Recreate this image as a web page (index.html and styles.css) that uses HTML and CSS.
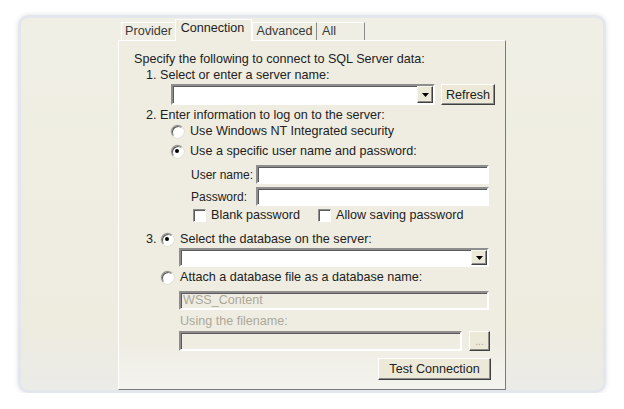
FILE: index.html
```html
<!DOCTYPE html>
<html lang="en">
<head>
  <meta charset="UTF-8" />
  <title>Data Link Properties - Connection</title>
  <link rel="stylesheet" href="styles.css">
</head>
<body>

  <div class="frame">
    <div class="dialog">
      <div class="tabs">
        <div class="tab tab-provider">Provider</div>
        <div class="tab tab-active">Connection</div>
        <div class="tab tab-advanced">Advanced</div>
        <div class="tab tab-all">All</div>
      </div>

      <div class="panel">
        <div class="line intro">Specify the following to connect to SQL Server data:</div>
        <div class="line step">1. Select or enter a server name:</div>

        <div class="server-row">
          <div class="combo combo-server">
            <span class="drop"><svg width="7" height="4" viewBox="0 0 7 4"><path d="M0 0h7L3.5 4z" fill="#000"/></svg></span>
          </div>
          <div class="btn btn-refresh">Refresh</div>
        </div>

        <div class="line step step-2">2. Enter information to log on to the server:</div>
        <div class="line option option-nt"><span class="radio"></span>Use Windows NT Integrated security</div>
        <div class="line option option-user"><span class="radio checked"></span>Use a specific user name and password:</div>

        <div class="cred-row cred-user">
          <span class="cred-label">User name:</span>
          <div class="field cred-input"></div>
        </div>
        <div class="cred-row cred-pass">
          <span class="cred-label">Password:</span>
          <div class="field cred-input"></div>
        </div>

        <div class="line checks">
          <span class="check-item check-blank"><span class="checkbox"></span>Blank password</span>
          <span class="check-item"><span class="checkbox"></span>Allow saving password</span>
        </div>

        <div class="line step step-3"><span class="num">3.</span><span class="radio checked"></span>Select the database on the server:</div>
        <div class="combo combo-db">
          <span class="drop"><svg width="7" height="4" viewBox="0 0 7 4"><path d="M0 0h7L3.5 4z" fill="#000"/></svg></span>
        </div>

        <div class="line option option-attach"><span class="radio"></span>Attach a database file as a database name:</div>
        <div class="field field-disabled field-name">WSS_Content</div>
        <div class="line muted">Using the filename:</div>

        <div class="file-row">
          <div class="field field-disabled field-file"></div>
          <div class="btn btn-browse">...</div>
        </div>

        <div class="btn btn-test">Test Connection</div>
      </div>
    </div>
  </div>

</body>
</html>
```

FILE: styles.css
```css
body {
  margin: 0;
  background: #fff;
  font-family: "Liberation Sans", Arial, sans-serif;
  font-size: 12.6px;
  color: #222;
}

/* marco redondeado alrededor de la captura */
.frame {
  box-sizing: border-box;
  margin: 15px 0 0 18px;
  width: 588px;
  height: 378px;
  border: 3px solid #e4e6ed;
  border-radius: 10px;
  background: linear-gradient(#f0efe5, #eeecdf 82%, #ebebe8);
  box-shadow: 0 0 5px rgba(0,0,0,0.13);
  overflow: hidden;
}
.dialog {
  margin: 1px 0 0 97px;
  width: 388px;
}

/* pestañas */
.tabs {
  display: flex;
  align-items: flex-end;
  height: 21px;
  padding-left: 3px;
  position: relative;
  z-index: 1;
}
.tab {
  box-sizing: border-box;
  height: 18px;
  line-height: 17px;
  text-align: center;
  white-space: nowrap;
  border: 1px solid #fff;
  border-right-color: #8a8a8a;
  border-bottom: none;
  border-left-color: #fdfdfb;
  background: #efeee4;
  color: #3a3a3a;
}
.tab-provider { width: 54px; border-right: none; }
.tab-active {
  width: 77px;
  height: 22px;
  line-height: 17px;
  margin-bottom: -1px;
  padding-right: 2px;
  background: #efede2;
  border-right-color: #fff;
  color: #222;
}
.tab-advanced { width: 65px; border-left: 1px solid #fff; }
.tab-all { width: 48px; text-align: left; padding-left: 5px; border-left: none; }

/* panel */
.panel {
  box-sizing: border-box;
  height: 350px;
  padding: 10px 0 0 0;
  border-top: 1px solid #fff;
  border-left: 1px solid #fff;
  border-right: 1px solid #7c7c7c;
  border-bottom: 1px solid #7c7c7c;
  background: linear-gradient(#efede2 86%, #f3f3ef);
}
.line {
  display: flex;
  align-items: center;
  height: 16px;
  white-space: nowrap;
}
.intro { padding-left: 15px; }
.step { padding-left: 27px; }
.step-2 { margin-top: 2px; }
.option { padding-left: 52px; }
.option-user { margin-top: 4px; }
.option-attach { margin-top: 2px; padding-left: 42px; }
.step-3 { margin-top: 8px; }
.step-3 .num { width: 15px; }
.muted { margin-top: 3px; padding-left: 61px; color: #aca899; }

/* controles estilo clásico */
.field, .combo {
  box-sizing: border-box;
  height: 19px;
  border: 2px solid;
  border-color: #8e8e8e #fff #fff #8e8e8e;
  box-shadow: inset 1px 1px #5a5a5a;
  background: #fff;
}
.field-disabled {
  background: transparent;
  color: #aca899;
  padding-left: 2px;
  line-height: 15px;
}
.combo {
  display: flex;
  justify-content: flex-end;
  align-items: center;
}
.drop {
  box-sizing: border-box;
  display: flex;
  align-items: center;
  justify-content: center;
  width: 16px;
  height: 15px;
  border: 1px solid;
  border-color: #f6f5f0 #404040 #404040 #f6f5f0;
  box-shadow: inset -1px -1px #8e8e8e;
  background: #ece9d8;
}
.btn {
  box-sizing: border-box;
  display: flex;
  align-items: center;
  justify-content: center;
  white-space: nowrap;
  border: 1px solid;
  border-color: #fff #404040 #404040 #fff;
  box-shadow: inset -1px -1px #8e8e8e;
  background: #ece9d8;
}

.server-row {
  display: flex;
  align-items: center;
  margin-top: 1px;
  padding-left: 52px;
  height: 21px;
}
.combo-server { width: 264px; height: 21px; }
.combo-server .drop { height: 17px; }
.btn-refresh { width: 54px; height: 21px; margin-left: 6px; }

.radio {
  box-sizing: border-box;
  position: relative;
  flex-shrink: 0;
  width: 13px;
  height: 13px;
  margin-right: 6px;
  border-radius: 50%;
  border: 1px solid;
  border-color: #8e8e8e #fff #fff #8e8e8e;
  box-shadow: inset 1px 1px #5a5a5a, 0 0 0 0.5px #d6d3c6;
  background: #fff;
}
.radio.checked::after {
  content: "";
  position: absolute;
  left: 3px;
  top: 3px;
  width: 4px;
  height: 4px;
  border-radius: 50%;
  background: #000;
}

.cred-row {
  display: flex;
  align-items: center;
  padding-left: 72px;
  height: 19px;
}
.cred-user { margin-top: 6px; }
.cred-pass { margin-top: 3px; }
.cred-label { flex: 0 0 65px; white-space: nowrap; font-size: 12px; }
.cred-input { width: 233px; flex-shrink: 0; }

.checks { margin-top: 1px; padding-left: 74px; }
.check-item { display: flex; align-items: center; }
.check-blank { width: 125px; }
.checkbox {
  box-sizing: border-box;
  flex-shrink: 0;
  width: 13px;
  height: 13px;
  margin-right: 5px;
  border: 1px solid;
  border-color: #8e8e8e #fff #fff #8e8e8e;
  box-shadow: inset 1px 1px #5a5a5a;
  background: #fff;
}

.combo-db { width: 310px; margin: 1px 0 0 60px; }
.field-name { width: 310px; margin: 6px 0 0 60px; }

.file-row {
  display: flex;
  align-items: flex-start;
  margin-top: 2px;
  padding-left: 60px;
  height: 20px;
}
.field-file { width: 283px; height: 20px; flex-shrink: 0; }
.btn-browse {
  width: 21px;
  height: 20px;
  margin-left: 7px;
  color: #aca899;
  align-items: flex-end;
  padding-bottom: 3px;
  font-size: 10px;
}

.btn-test { width: 113px; height: 22px; margin: 7px 0 0 259px; }
```
